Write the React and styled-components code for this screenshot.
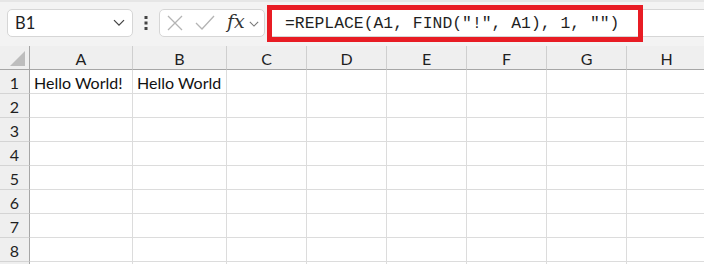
import React from "react";
import styled, { createGlobalStyle } from "styled-components";

const Global = createGlobalStyle`
  html, body { margin: 0; padding: 0; background: #f3f3f3; overflow: hidden; }
  body { font-family: Lato, "Noto Sans", sans-serif; }
`;

const Page = styled.div`
  width: 704px;
  height: 264px;
  overflow: hidden;
  border-top: 2px solid #e6e6e6;
  box-sizing: border-box;
  background: #f3f3f3;
`;

const Toolbar = styled.div`
  height: 44px;
  display: flex;
  align-items: center;
  padding-left: 7px;
  box-sizing: border-box;
`;

const Box = styled.div`
  height: 28px;
  box-sizing: border-box;
  background: #fff;
  border: 1px solid #d6d6d6;
  border-radius: 5px;
  display: flex;
  align-items: center;
  margin-top: -2px;
`;

const NameBox = styled(Box)`
  width: 126px;
  padding: 0 7px 0 7px;
  justify-content: space-between;
  font-size: 16.5px;
  color: #1f1f1f;
`;

const Dots = styled.div`
  width: 26px;
  display: flex;
  justify-content: center;
  margin-top: -2px;
`;

const FxBox = styled(Box)`
  width: 106px;
  padding: 0 5px 0 6px;
`;

const FxLabel = styled.span`
  margin-left: 11px;
  margin-top: -3px;
  font-family: "DejaVu Serif", "Liberation Serif", serif;
  font-style: italic;
  font-size: 19px;
  color: #333;
  line-height: 1;
`;

const FormulaWrap = styled.div`
  position: relative;
  flex: 1;
  margin-left: 2px;
  height: 28px;
  margin-top: -2px;
`;

const FormulaField = styled.div`
  height: 28px;
  box-sizing: border-box;
  background: #fff;
  border: 1px solid #d6d6d6;
  border-right: none;
  border-radius: 5px 0 0 5px;
  display: flex;
  align-items: center;
  padding-left: 17px;
  font-family: "Liberation Mono", "DejaVu Sans Mono", monospace;
  font-size: 16.4px;
  color: #1f1f1f;
  white-space: pre;
`;

const Highlight = styled.div`
  position: absolute;
  left: 0;
  top: -4px;
  width: 376px;
  height: 37px;
  box-sizing: border-box;
  border: 5px solid #e81c24;
  pointer-events: none;
`;

const Grid = styled.div`
  display: grid;
  grid-template-columns: 30px 103px 94px repeat(6, 80px);
  grid-auto-rows: 24px;
`;

const Cell = styled.div`
  box-sizing: border-box;
  background: #fff;
  border-right: 1px solid #dcdcdc;
  border-bottom: 1px solid #dcdcdc;
  font-size: 16px;
  color: #111;
  display: flex;
  align-items: center;
  padding: 2px 0 0 4px;
  white-space: nowrap;
  overflow: hidden;
`;

const ColHead = styled.div`
  box-sizing: border-box;
  background: #efefef;
  border-right: 1px solid #cfcfcf;
  border-bottom: 1px solid #a6a6a6;
  display: flex;
  align-items: center;
  justify-content: center;
  font-size: 16px;
  color: #1f1f1f;
  padding-top: 2px;
`;

const RowHead = styled.div`
  box-sizing: border-box;
  background: #efefef;
  border-right: 1px solid #a6a6a6;
  border-bottom: 1px solid #d4d4d4;
  display: flex;
  align-items: center;
  justify-content: center;
  font-size: 16px;
  color: #1f1f1f;
  padding-top: 2px;
`;

const Corner = styled.div`
  box-sizing: border-box;
  background: #efefef;
  border-right: 1px solid #a6a6a6;
  border-bottom: 1px solid #a6a6a6;
  display: flex;
  align-items: flex-end;
  justify-content: flex-end;
  padding: 0 4px 3px 0;
`;

const Chevron = ({ size = 12, color = "#444" }) => (
  <svg width={size} height={size * 0.6} viewBox="0 0 12 7">
    <path d="M1 1l5 5 5-5" fill="none" stroke={color} strokeWidth="1.3" />
  </svg>
);

const cols = ["A", "B", "C", "D", "E", "F", "G", "H"];
const rows = [1, 2, 3, 4, 5, 6, 7, 8, 9];
const data = { "1-A": "Hello World!", "1-B": "Hello World" };

export default function App() {
  return (
    <Page>
      <Global />
      <Toolbar>
        <NameBox>
          <span>B1</span>
          <Chevron />
        </NameBox>
        <Dots>
          <svg width="4" height="14" viewBox="0 0 4 14">
            <rect x="0.5" y="0" width="3" height="3" fill="#444" />
            <rect x="0.5" y="5.5" width="3" height="3" fill="#444" />
            <rect x="0.5" y="11" width="3" height="3" fill="#444" />
          </svg>
        </Dots>
        <FxBox>
          <svg width="18" height="18" viewBox="0 0 18 18">
            <path d="M2 2l14 14M16 2L2 16" stroke="#b4b4b4" strokeWidth="1.3" fill="none" />
          </svg>
          <svg width="22" height="18" viewBox="0 0 22 18" style={{ marginLeft: 10 }}>
            <path d="M2 9l6 6L20 2" stroke="#b4b4b4" strokeWidth="1.3" fill="none" />
          </svg>
          <FxLabel>fx</FxLabel>
          <span style={{ marginLeft: 4, marginTop: 2, display: "flex" }}>
            <Chevron size={10} color="#777" />
          </span>
        </FxBox>
        <FormulaWrap>
          <FormulaField>=REPLACE(A1, FIND("!", A1), 1, "")</FormulaField>
          <Highlight />
        </FormulaWrap>
      </Toolbar>
      <Grid>
        <Corner>
          <svg width="15" height="15" viewBox="0 0 15 15">
            <path d="M15 0V15H0Z" fill="#bdbdbd" />
          </svg>
        </Corner>
        {cols.map((c) => (
          <ColHead key={c}>{c}</ColHead>
        ))}
        {rows.map((r) => (
          <React.Fragment key={r}>
            <RowHead>{r < 9 ? r : ""}</RowHead>
            {cols.map((c) => (
              <Cell key={c}>{data[`${r}-${c}`] || ""}</Cell>
            ))}
          </React.Fragment>
        ))}
      </Grid>
    </Page>
  );
}
